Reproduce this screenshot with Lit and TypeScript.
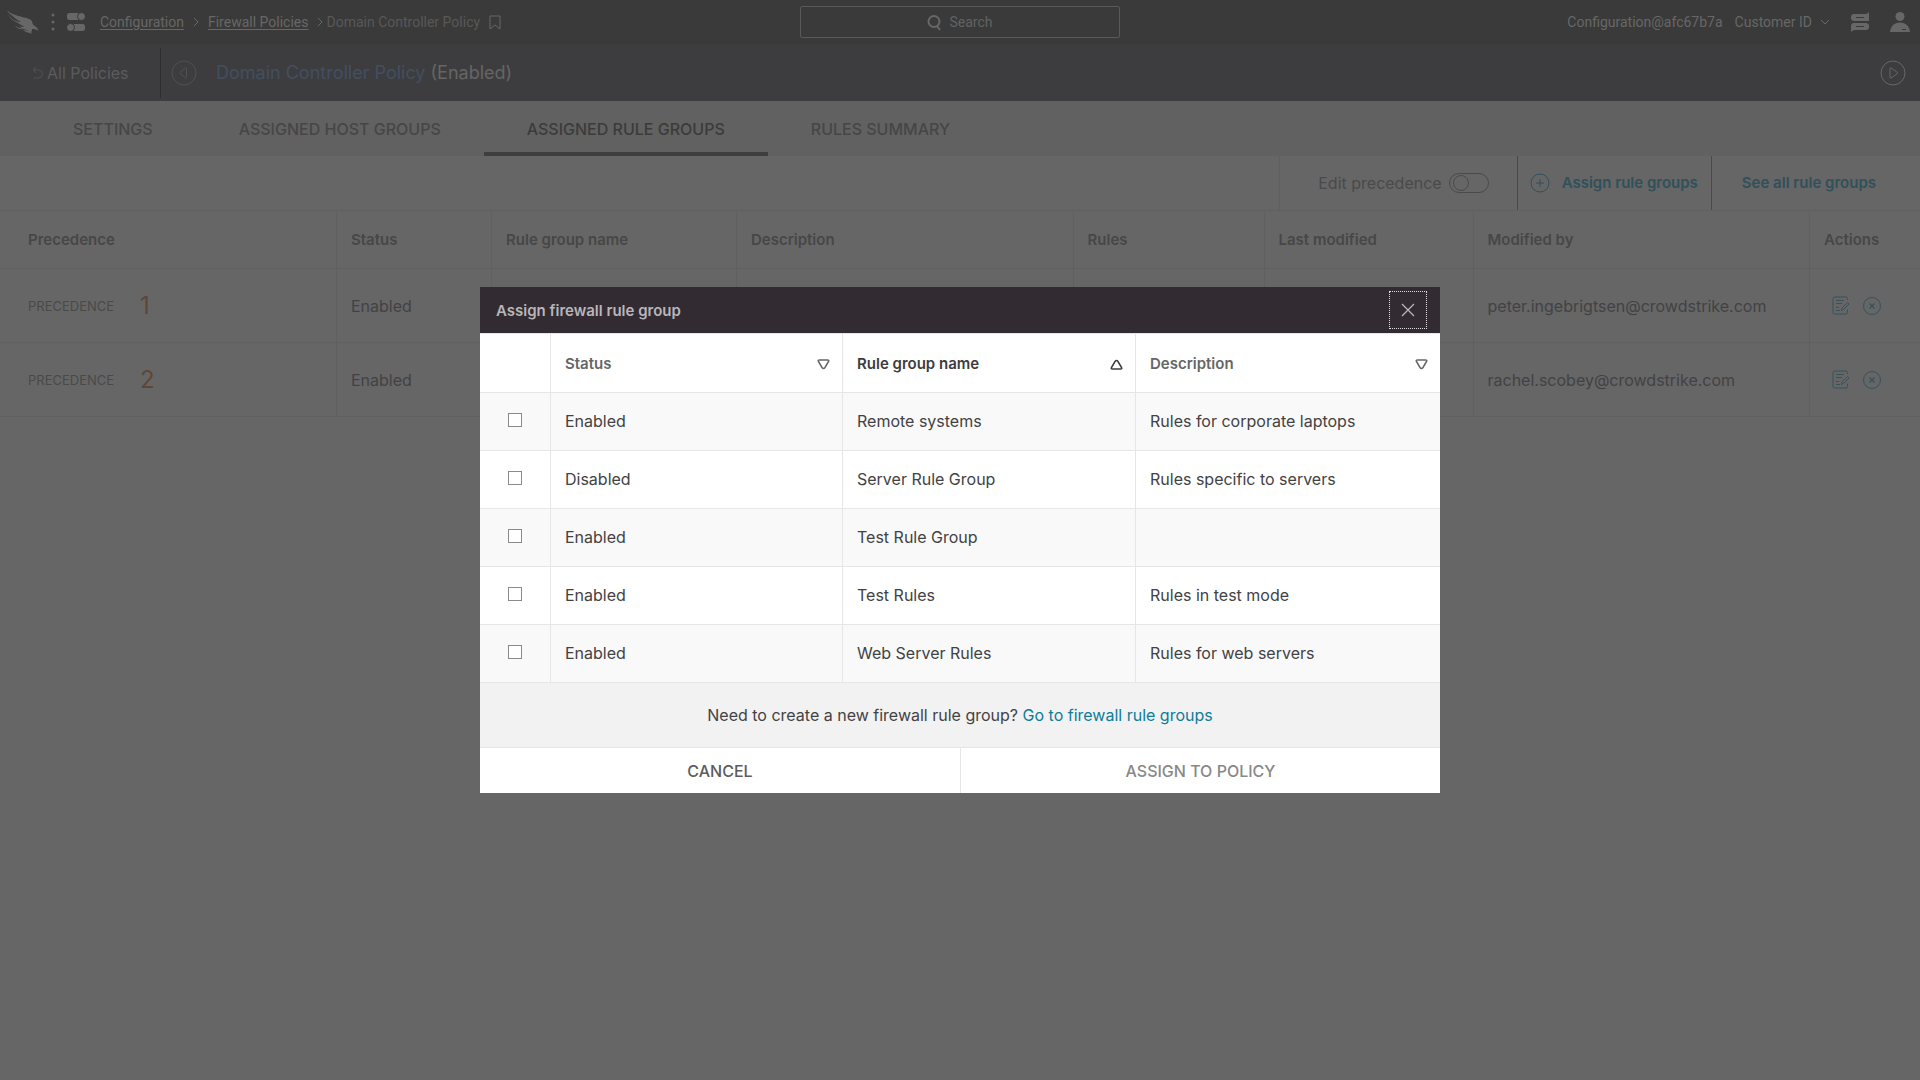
import { LitElement, html, css, svg } from "lit";
import { customElement, state } from "lit/decorators.js";

interface RuleGroup {
  status: string;
  name: string;
  description: string;
}

interface Assigned {
  precedence: number;
  status: string;
  modifiedBy: string;
}

const GROUPS: RuleGroup[] = [
  { status: "Enabled", name: "Remote systems", description: "Rules for corporate laptops" },
  { status: "Disabled", name: "Server Rule Group", description: "Rules specific to servers" },
  { status: "Enabled", name: "Test Rule Group", description: "" },
  { status: "Enabled", name: "Test Rules", description: "Rules in test mode" },
  { status: "Enabled", name: "Web Server Rules", description: "Rules for web servers" },
];

const ASSIGNED: Assigned[] = [
  { precedence: 1, status: "Enabled", modifiedBy: "peter.ingebrigtsen@crowdstrike.com" },
  { precedence: 2, status: "Enabled", modifiedBy: "rachel.scobey@crowdstrike.com" },
];

const TABS = ["SETTINGS", "ASSIGNED HOST GROUPS", "ASSIGNED RULE GROUPS", "RULES SUMMARY"];

const icon = (w: number, h: number, body: unknown) => html`<svg
  width=${w}
  height=${h}
  viewBox="0 0 ${w} ${h}"
  fill="none"
  stroke="currentColor"
  aria-hidden="true"
>
  ${body}
</svg>`;

const falcon = icon(
  32,
  25,
  svg`<g fill="currentColor" stroke="none">
    <path d="M3 3C7 6 11 6 15 7C20 8 25 9 25.500 13C26 16 29 16 30 18C31 19 31 20 31 21C29 19 27 19 25 19C25 21 24 22 24.500 24C22 23 21.500 21 20 20C17 19.500 14 18 12 16C14 17 16 17 17 16.500C13 14.500 10 12.500 7 9.500C10 11.500 12 12 14 12C9 9.500 6 7 3 3Z"/>
    <path d="M0 0C3 4 9 5 15 7C8 7 2 5 0 0Z"/>
    <path d="M1 4C3 8 7 11 13 13.500C8 12.500 3 9 1 4Z"/>
    <path d="M7 15C10 18 15 18.500 19 18.500C15 20 10 19 7 15Z"/>
    <path d="M16 20C19 20 22 21 24 22.500C21 23 18 22 16 20Z"/>
  </g>`
);
const kebab = icon(
  4,
  18,
  svg`<g fill="currentColor" stroke="none"><circle cx="2" cy="2" r="1.500"/><circle cx="2" cy="9" r="1.500"/><circle cx="2" cy="16" r="1.500"/></g>`
);
const modules = icon(
  18,
  18,
  svg`<g fill="currentColor" stroke="none"><rect width="14" height="7" rx="2.500"/><rect x="4" y="11" width="14" height="7" rx="2.500"/></g>
  <g fill="currentColor" class="cut"><circle cx="14.500" cy="3.500" r="4"/><circle cx="3.500" cy="14.500" r="4"/></g>`
);
const chevronRight = icon(6, 10, svg`<path d="M1 1L5 5L1 9"/>`);
const chevronDown = icon(10, 6, svg`<path d="M1 1L5 5L9 1"/>`);
const bookmark = icon(12, 15, svg`<path d="M1 1H11V14L6 10L1 14Z"/>`);
const magnifier = icon(
  15,
  17,
  svg`<g stroke-width="2"><circle cx="7" cy="7.500" r="5.500"/><path d="M10 12L13 16"/></g>`
);
const messages = icon(
  18,
  20,
  svg`<path d="M18 0V9H3A3 3 0 0 1 0 6V5A3 3 0 0 1 3 2H14C16 2 17 1 18 0Z M0 20V14A3 3 0 0 1 3 11H15A3 3 0 0 1 18 14V15A3 3 0 0 1 15 18H4C2 18 1 19 0 20Z" fill="currentColor" stroke="none"/><path class="cut" d="M5 5.500H13M5 14.500H13"/>`
);
const person = icon(
  20,
  20,
  svg`<g fill="currentColor" stroke="none"><circle cx="10" cy="4.500" r="4.500"/><path d="M0 20C1 14 4 10.500 10 10.500S19 14 20 20Z"/></g><path class="cut" d="M12 17.500H16"/>`
);
const back = icon(11, 13, svg`<path d="M4 1L1 4L4 7M1 4H6.500A4 4 0 0 1 6.500 12H1"/>`);
const prev = icon(
  26,
  26,
  svg`<circle cx="13" cy="13" r="12"/><path d="M15.500 8.500V17.500Q15.500 18.500 14.500 18L9 13.500Q8.500 13 9 12.500L14.500 8Q15.500 7.500 15.500 8.500Z"/>`
);
const next = icon(
  26,
  26,
  svg`<circle cx="13" cy="13" r="12"/><path d="M10 8.500Q10 7.500 11 8L17.500 12.500Q18 13 17.500 13.500L11 18Q10 18.500 10 17.500Z"/>`
);
const plus = icon(20, 20, svg`<circle cx="10" cy="10" r="9"/><path d="M10 6V14M6 10H14"/>`);
const edit = icon(
  17,
  19,
  svg`<path d="M15.500 4V2.500Q15.500 1 14 1H2.500Q1 1 1 2.500V16.500Q1 18 2.500 18H14Q15.500 18 15.500 16.500V13.500M4 4.500H12M4 7.500H10M4 11.500H7M4 14.500H8"/><path d="M9.500 14.500L10 12L15.500 6.500L17 8L11.500 13.500Z"/>`
);
const remove = icon(
  20,
  20,
  svg`<circle cx="10" cy="10" r="8.500"/><path d="M7.500 7.500L12.500 12.500M12.500 7.500L7.500 12.500" stroke-width="1.300"/>`
);
const cross = icon(14, 14, svg`<path d="M1 1L13 13M13 1L1 13" stroke-width="1.300"/>`);
const sortDown = icon(
  13,
  11,
  svg`<path d="M2.500 1H10.500Q12.500 1 11.500 2.500L8 8.500Q6.500 10.500 5 8.500L1.500 2.500Q.5 1 2.500 1Z" stroke-width="1.500"/>`
);
const sortUp = icon(
  13,
  11,
  svg`<path d="M2.500 10H10.500Q12.500 10 11.500 8.500L8 2.500Q6.500 .5 5 2.500L1.500 8.500Q.5 10 2.500 10Z" stroke-width="1.500"/>`
);

@customElement("app-root")
export class AppRoot extends LitElement {
  @state() private activeTab = 2;

  static styles = css`
    :host {
      display: block;
      min-height: 100vh;
      background: #666666;
      color: #424244;
      font-family: Inter, "Liberation Sans", sans-serif;
      font-size: 16px;
      line-height: 24px;
    }
    * {
      box-sizing: border-box;
    }
    button,
    input {
      font: inherit;
      color: inherit;
      background: none;
      border: 0;
      margin: 0;
      padding: 0;
    }
    a {
      color: inherit;
      text-decoration: none;
    }
    svg {
      display: block;
      flex: none;
    }
    table {
      width: 100%;
      table-layout: fixed;
      border-collapse: separate;
      border-spacing: 0;
    }
    th {
      text-align: left;
      font-size: 15px;
      font-weight: 600;
    }

    .topbar {
      display: grid;
      grid-template-columns: 1fr 320px 1fr;
      align-items: center;
      height: 44px;
      background: #3a3a3a;
      color: #676767;
      font-family: Roboto, "Liberation Sans", sans-serif;
      font-size: 14px;
      line-height: 20px;
    }
    .topbar .cut {
      stroke: #3a3a3a;
    }
    .lead,
    .crumbs,
    .current,
    .account,
    .customer {
      display: flex;
      align-items: center;
    }
    .lead {
      gap: 12px;
      padding-left: 7px;
    }
    .crumbs {
      gap: 9px;
      padding-left: 3px;
    }
    .crumbs a {
      text-decoration: underline;
      text-underline-offset: 2px;
    }
    .current {
      gap: 3px;
    }
    .here {
      color: #585858;
    }
    .search {
      display: flex;
      align-items: center;
      justify-content: center;
      gap: 8px;
      height: 32px;
      border: 1px solid #595959;
      border-radius: 2px;
    }
    .search input {
      width: 44px;
      outline: none;
    }
    .search input::placeholder {
      color: #626262;
      opacity: 1;
    }
    .account {
      justify-content: flex-end;
      gap: 21px;
      padding-right: 10px;
    }
    .customer {
      gap: 8px;
    }
    .who {
      display: flex;
      gap: 12px;
    }

    .policybar {
      display: flex;
      align-items: center;
      height: 57px;
      background: #3d3d3f;
      color: #5b5b5d;
    }
    .all {
      display: flex;
      align-items: center;
      gap: 4px;
      width: 161px;
      height: 50px;
      padding-left: 32px;
      border-right: 1px solid #2e2e30;
    }
    .all svg,
    .prev {
      color: #515153;
    }
    .prev {
      margin: 0 19px 0 10px;
    }
    .policy {
      flex: 1;
      margin: 0;
      font-size: 18px;
      font-weight: 400;
      color: #656565;
    }
    .policy a {
      color: #424f61;
    }
    .next {
      margin-right: 14px;
      color: #676767;
    }

    .tabs {
      display: flex;
      height: 55px;
      padding-left: 30px;
      background: #616161;
    }
    .tab {
      padding: 5px 43px 0;
      border-bottom: 4px solid transparent;
      font-weight: 500;
      color: #464646;
    }
    .tab.on {
      color: #3b3b3b;
      border-color: #3e3e3e;
    }

    .toolbar {
      display: flex;
      justify-content: flex-end;
      height: 55px;
      border-bottom: 1px solid #606060;
    }
    .precedence-switch {
      display: flex;
      align-items: center;
      gap: 7px;
      padding: 0 28px 0 38px;
      border-left: 1px solid #606060;
      color: #4a4a4a;
    }
    .switch {
      appearance: none;
      display: flex;
      align-items: center;
      width: 40px;
      height: 20px;
      padding-left: 3px;
      border: 1px solid #4a4a4a;
      border-radius: 10px;
    }
    .switch::before {
      content: "";
      width: 14px;
      height: 14px;
      border: 1px solid #4a4a4a;
      border-radius: 50%;
    }
    .assign,
    .see-all {
      display: flex;
      align-items: center;
      border-left: 1px solid #4a4a4a;
      font-size: 15px;
      font-weight: 600;
      color: #30505a;
    }
    .assign {
      gap: 12px;
      padding: 0 13px 0 12px;
    }
    .see-all {
      padding: 0 44px 0 30px;
    }

    .policies th,
    .policies td {
      padding: 0 14px;
      border-bottom: 1px solid #606060;
    }
    .policies th + th,
    .policies td + td {
      border-left: 1px solid #606060;
    }
    .policies th:first-child,
    .policies td:first-child {
      padding-left: 28px;
    }
    .policies th {
      height: 58px;
      color: #474747;
    }
    .policies td {
      height: 74px;
    }
    .c-precedence {
      width: 336px;
    }
    .c-status {
      width: 155px;
    }
    .c-name {
      width: 245px;
    }
    .c-rules {
      width: 191px;
    }
    .c-modified {
      width: 209px;
    }
    .c-actions {
      width: 111px;
    }
    .rank {
      display: flex;
      align-items: center;
      gap: 26px;
      color: #4a4a4a;
      font-size: 13px;
    }
    .rank strong {
      font-size: 24px;
      font-weight: 400;
      color: #5f4635;
    }
    .actions {
      display: flex;
      align-items: center;
      gap: 13px;
      padding-left: 8px;
      color: #34535e;
    }

    .overlay {
      position: fixed;
      inset: 0;
      display: grid;
      grid-template-columns: 50%;
      place-content: center;
    }
    .modal {
      background: #ffffff;
      color: #424244;
    }
    .modal-head {
      display: flex;
      align-items: center;
      justify-content: space-between;
      height: 46px;
      padding: 0 13px 0 16px;
      background: #322b32;
      color: #b9b6b9;
    }
    .modal-head h2 {
      margin: 0;
      padding-top: 1px;
      font-size: 15px;
      line-height: 24px;
      font-weight: 600;
    }
    .close {
      display: grid;
      place-items: center;
      width: 38px;
      height: 38px;
      border: 1px dotted #e2e0e2;
    }
    .groups th,
    .groups td {
      height: 58px;
      padding: 0 14px 2px;
      border-bottom: 1px solid #e6e6e6;
    }
    .groups th {
      height: 60px;
      padding: 2px 12px 0 14px;
      border-top: 1px solid #e6e6e6;
    }
    .groups th + th,
    .groups td + td {
      border-left: 1px solid #e6e6e6;
    }
    .groups tbody tr:nth-child(odd) {
      background: #f9f9f9;
    }
    .c-pick {
      width: 70px;
    }
    .c-gstatus {
      width: 292px;
    }
    .c-gname {
      width: 293px;
    }
    .sort {
      display: flex;
      align-items: center;
      justify-content: space-between;
      width: 100%;
      color: #666666;
    }
    .sort.on {
      color: #3c3c3e;
    }
    .pick {
      appearance: none;
      display: block;
      width: 14px;
      height: 14px;
      margin: 0 auto 2px;
      border: 1px solid #8a8a8a;
      background: #ffffff;
    }
    .hint {
      margin: 0;
      padding: 20px 16px;
      background: #f2f2f2;
      border-bottom: 1px solid #e6e6e6;
      text-align: center;
    }
    .hint a {
      color: #0e7c9a;
    }
    .buttons {
      display: grid;
      grid-template-columns: 1fr 1fr;
      height: 45px;
    }
    .buttons button {
      padding-top: 1px;
      font-weight: 500;
      color: #5c5c5c;
    }
    .buttons button + button {
      border-left: 1px solid #e6e6e6;
      color: #888888;
    }
  `;

  private sortHead(label: string, on: boolean) {
    return html`<th scope="col">
      <button class="sort ${on ? "on" : ""}">${label} ${on ? sortUp : sortDown}</button>
    </th>`;
  }

  render() {
    return html`
      <header class="topbar">
        <div class="lead">
          <a href="#" aria-label="Home">${falcon}</a>
          <button aria-label="Menu">${kebab}</button>
          <button aria-label="Modules">${modules}</button>
          <nav class="crumbs" aria-label="Breadcrumb">
            <a href="#">Configuration</a>${chevronRight}<a href="#">Firewall Policies</a>
            <span class="current">${chevronRight}<span class="here">Domain Controller Policy</span></span>
            <button aria-label="Bookmark">${bookmark}</button>
          </nav>
        </div>
        <label class="search">${magnifier}<input placeholder="Search" aria-label="Search" /></label>
        <div class="account">
          <div class="who">
            <span>Configuration@afc67b7a</span>
            <button class="customer">Customer ID ${chevronDown}</button>
          </div>
          <button aria-label="Messages">${messages}</button>
          <button aria-label="Account">${person}</button>
        </div>
      </header>

      <div class="policybar">
        <a class="all" href="#">${back}All Policies</a>
        <button class="prev" aria-label="Previous policy">${prev}</button>
        <h1 class="policy"><a href="#">Domain Controller Policy</a> (Enabled)</h1>
        <button class="next" aria-label="Next policy">${next}</button>
      </div>

      <nav class="tabs">
        ${TABS.map(
          (t, i) => html`<button class="tab ${i === this.activeTab ? "on" : ""}" @click=${() => (this.activeTab = i)}>
            ${t}
          </button>`
        )}
      </nav>

      <main>
        <div class="toolbar">
          <label class="precedence-switch">Edit precedence<input class="switch" type="checkbox" role="switch" /></label>
          <button class="assign">${plus}Assign rule groups</button>
          <a class="see-all" href="#">See all rule groups</a>
        </div>
        <table class="policies">
          <colgroup>
            <col class="c-precedence" />
            <col class="c-status" />
            <col class="c-name" />
            <col />
            <col class="c-rules" />
            <col class="c-modified" />
            <col />
            <col class="c-actions" />
          </colgroup>
          <thead>
            <tr>
              <th scope="col">Precedence</th>
              <th scope="col">Status</th>
              <th scope="col">Rule group name</th>
              <th scope="col">Description</th>
              <th scope="col">Rules</th>
              <th scope="col">Last modified</th>
              <th scope="col">Modified by</th>
              <th scope="col">Actions</th>
            </tr>
          </thead>
          <tbody>
            ${ASSIGNED.map(
              (r) => html`<tr>
                <td><div class="rank">PRECEDENCE <strong>${r.precedence}</strong></div></td>
                <td>${r.status}</td>
                <td></td>
                <td></td>
                <td></td>
                <td></td>
                <td>${r.modifiedBy}</td>
                <td>
                  <div class="actions">
                    <button aria-label="Edit">${edit}</button>
                    <button aria-label="Remove">${remove}</button>
                  </div>
                </td>
              </tr>`
            )}
          </tbody>
        </table>
      </main>

      <div class="overlay">
        <section class="modal" role="dialog" aria-modal="true" aria-labelledby="modal-title">
          <header class="modal-head">
            <h2 id="modal-title">Assign firewall rule group</h2>
            <button class="close" aria-label="Close">${cross}</button>
          </header>
          <table class="groups">
            <colgroup>
              <col class="c-pick" />
              <col class="c-gstatus" />
              <col class="c-gname" />
              <col />
            </colgroup>
            <thead>
              <tr>
                <th></th>
                ${this.sortHead("Status", false)} ${this.sortHead("Rule group name", true)}
                ${this.sortHead("Description", false)}
              </tr>
            </thead>
            <tbody>
              ${GROUPS.map(
                (g) => html`<tr>
                  <td><input class="pick" type="checkbox" aria-label=${g.name} /></td>
                  <td>${g.status}</td>
                  <td>${g.name}</td>
                  <td>${g.description}</td>
                </tr>`
              )}
            </tbody>
          </table>
          <p class="hint">Need to create a new firewall rule group? <a href="#">Go to firewall rule groups</a></p>
          <div class="buttons">
            <button>CANCEL</button>
            <button>ASSIGN TO POLICY</button>
          </div>
        </section>
      </div>
    `;
  }
}
